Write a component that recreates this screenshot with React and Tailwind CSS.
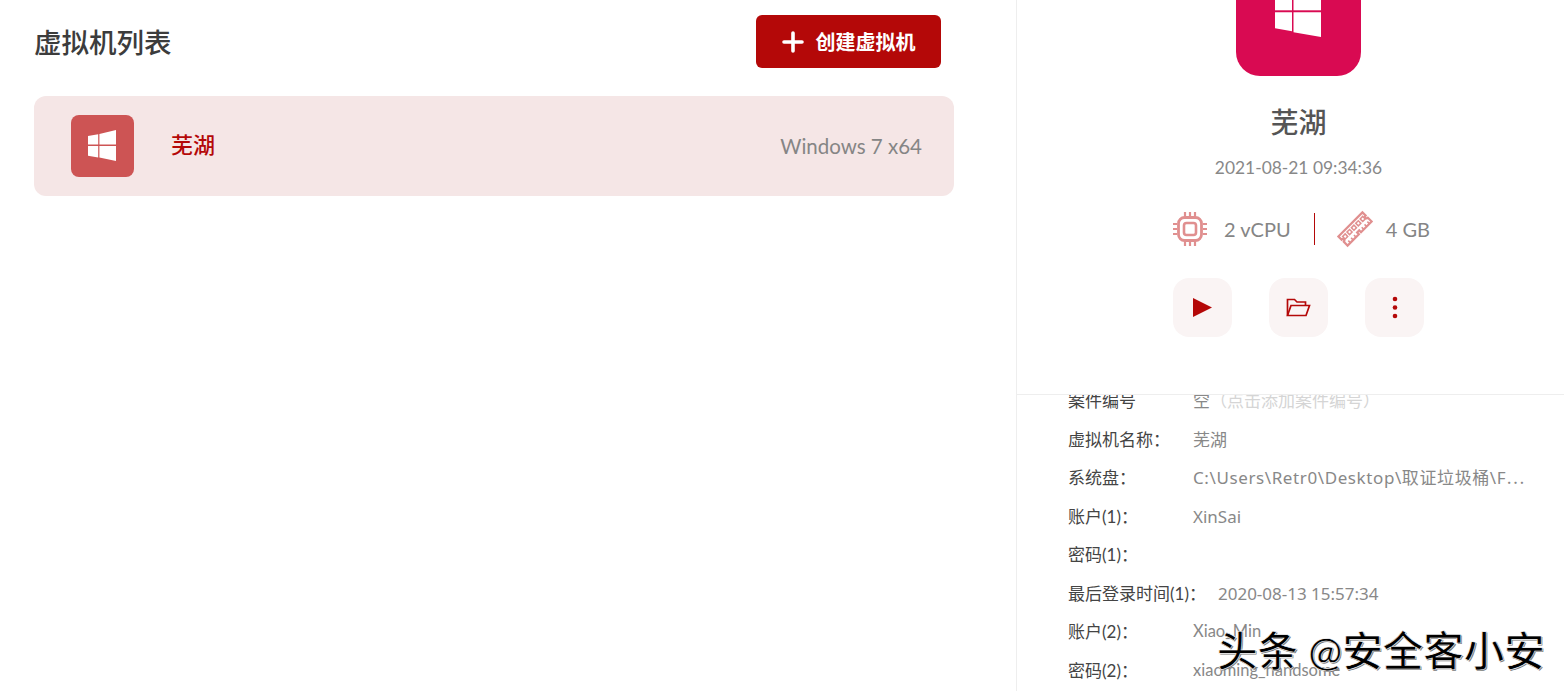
const FONT = "font-['Lato','Noto_Sans_CJK_SC',sans-serif]";
const VALUE = "font-['Noto_Sans','Noto_Sans_CJK_SC',sans-serif] text-[17px]";

const rows = [
  { label: '案件编号', value: '空', hint: '（点击添加案件编号）', valueClass: VALUE },
  { label: '虚拟机名称：', value: '芜湖', valueClass: VALUE },
  { label: '系统盘：', value: 'C:\\Users\\Retr0\\Desktop\\取证垃圾桶\\F⋯', valueClass: `${VALUE} tracking-[0.6px]` },
  { label: '账户(1)：', value: 'XinSai', valueClass: VALUE },
  { label: '密码(1)：', value: '', valueClass: VALUE },
  { label: '最后登录时间(1)：', value: '2020-08-13 15:57:34', valueClass: VALUE },
  { label: '账户(2)：', value: 'Xiao_Min', valueClass: 'text-[16.5px]' },
  { label: '密码(2)：', value: 'xiaoming_handsome', valueClass: 'text-[16.5px]' },
];

function WindowsIcon({ className }) {
  return (
    <svg className={className} viewBox="0 0 28 31" fill="currentColor">
      <polygon points="0,6 10.2,4.2 10.2,14.6 0,14.6" />
      <polygon points="11.4,4 28,0 28,14.6 11.4,14.6" />
      <polygon points="0,16 10.2,16 10.2,27.4 0,25.7" />
      <polygon points="11.4,16 28,16 28,31 11.4,27.6" />
    </svg>
  );
}

function CpuIcon() {
  return (
    <svg className="w-[36px] h-[36px] text-[#e08f8f]" viewBox="0 0 36 36" fill="none" stroke="currentColor">
      <rect x="6.5" y="6.5" width="23" height="23" rx="6" strokeWidth="2.8" />
      <rect x="12" y="12" width="12" height="12" rx="2.5" strokeWidth="2.6" />
      <path
        strokeWidth="2.2"
        d="M13 1v4M18 1v4M23 1v4M13 31v4M18 31v4M23 31v4M1 13h4M1 18h4M1 23h4M31 13h4M31 18h4M31 23h4"
      />
    </svg>
  );
}

function RamIcon() {
  return (
    <svg className="w-[36px] h-[36px] text-[#e08f8f] overflow-visible" viewBox="0 0 36 36" fill="none" stroke="currentColor">
      <g transform="rotate(-45 18 18)">
        <path
          strokeWidth="2.2"
          d="M1 11.5h34v4.5a1.6 1.6 0 0 0 0 3.2v5.3H20v-2.5h-3v2.5H1v-5.3a1.6 1.6 0 0 0 0-3.2z"
        />
        <path strokeWidth="1.6" d="M5 24.5v-3M9 24.5v-3M13 24.5v-3M24 24.5v-3M28 24.5v-3M32 24.5v-3" />
        <rect x="4" y="14.5" width="3.6" height="3.6" strokeWidth="1.5" />
        <rect x="10.2" y="14.5" width="3.6" height="3.6" strokeWidth="1.5" />
        <rect x="16.4" y="14.5" width="3.6" height="3.6" strokeWidth="1.5" />
        <rect x="22.6" y="14.5" width="3.6" height="3.6" strokeWidth="1.5" />
        <rect x="28.8" y="14.5" width="3.6" height="3.6" strokeWidth="1.5" />
      </g>
    </svg>
  );
}

function ActionButton({ children }) {
  return (
    <button className="w-[59px] h-[59px] rounded-2xl bg-[#faf4f4] text-[#b40808] flex items-center justify-center">
      {children}
    </button>
  );
}

export default function App() {
  return (
    <div className={`relative flex w-full h-[691px] overflow-hidden bg-white ${FONT}`}>
      {/* VM list */}
      <div className="w-[1017px] shrink-0 border-r border-[#eeeeee] pl-[34px] pr-[62px] pt-[15px]">
        <div className="flex items-center justify-between pr-[13px]">
          <h2 className="pt-[2px] text-[27.5px] font-medium text-[#3c3c3c]">虚拟机列表</h2>
          <button className="w-[185px] h-[53px] rounded-md bg-[#b40808] text-white flex items-center justify-center gap-[12px] text-[20px] font-bold">
            <svg className="w-[22px] h-[22px]" viewBox="0 0 22 22" stroke="currentColor" strokeWidth="3.6" strokeLinecap="round">
              <path d="M11 2v18M2 11h18" />
            </svg>
            创建虚拟机
          </button>
        </div>

        <div className="mt-[28px] h-[100px] rounded-xl bg-[#f5e6e6] flex items-center pl-[37px] pr-[32px]">
          <div className="w-[63px] h-[62px] rounded-lg bg-[#cd5454] text-white flex items-center justify-center">
            <WindowsIcon className="w-[28px] h-[31px] mr-[2px] mb-[1px]" />
          </div>
          <span className="ml-[37px] pb-[3px] text-[22px] font-medium text-[#b40808]">芜湖</span>
          <span className="ml-auto text-[20.5px] text-[#858585]">Windows 7 x64</span>
        </div>
      </div>

      {/* VM detail */}
      <div className="flex-1 min-w-0 flex flex-col">
        <div className="h-[395px] shrink-0 border-b border-[#eeeeee] pl-[16px] flex flex-col items-center">
          <div className="w-[125px] h-[76px] rounded-b-[24px] bg-[#d90a52] text-white flex justify-center shrink-0">
            <svg className="w-[46px] h-[37px] mr-[2px]" viewBox="0 0 46 37" fill="currentColor">
              <polygon points="0,0 17,0 17,10.3 0,10.3" />
              <polygon points="18.5,0 46,0 46,10.3 18.5,10.3" />
              <polygon points="0,12.3 17,12.3 17,31.2 0,28.3" />
              <polygon points="18.5,12.3 46,12.3 46,37 18.5,32.2" />
            </svg>
          </div>
          <h3 className="mt-[25px] h-[42px] leading-[42px] text-[28px] font-medium text-[#555555]">芜湖</h3>
          <p className="mt-[13px] h-[24px] leading-[24px] text-[17.4px] text-[#888888]">2021-08-21 09:34:36</p>

          <div className="mt-[31px] ml-[5px] flex items-center h-[36px] text-[20px] text-[#858585]">
            <CpuIcon />
            <span className="ml-[16px]">2 vCPU</span>
            <div className="ml-[23px] mr-[22px] h-[32px] border-l border-[#b40808]" />
            <RamIcon />
            <span className="ml-[13px]">4 GB</span>
          </div>

          <div className="mt-[31px] flex gap-[37px]">
            <ActionButton>
              <svg className="w-[19px] h-[19px]" viewBox="0 0 19 19" fill="currentColor">
                <polygon points="0,0 19,9.5 0,19" />
              </svg>
            </ActionButton>
            <ActionButton>
              <svg className="w-[25px] h-[19px]" viewBox="0 0 25 19" fill="none" stroke="currentColor" strokeWidth="1.7">
                <path d="M1.5 17.5V1.5h7l2.5 2.5h8.5v3.5" />
                <path d="M1.5 17.5l3.5-10h18.5l-3.5 10z" />
              </svg>
            </ActionButton>
            <ActionButton>
              <svg className="w-[6px] h-[23px]" viewBox="0 0 6 23" fill="currentColor">
                <circle cx="3" cy="3" r="2.3" />
                <circle cx="3" cy="11.5" r="2.3" />
                <circle cx="3" cy="20" r="2.3" />
              </svg>
            </ActionButton>
          </div>
        </div>

        <div className="flex-1 overflow-hidden pl-[51px] pr-[40px]">
          <div className="-mt-[13.5px] flex flex-col">
            {rows.map((row) => (
              <div key={row.label} className="flex h-[38.5px] items-center whitespace-nowrap">
                <span className="min-w-[125px] pr-[12px] text-[17px] text-[#444444]">{row.label}</span>
                <span className={`${row.valueClass} text-[#888888]`}>
                  {row.value}
                  {row.hint && <span className="text-[#d5d5d5]">{row.hint}</span>}
                </span>
              </div>
            ))}
          </div>
        </div>
      </div>

      {/* Watermark */}
      <div className="absolute left-[1217px] top-[624px] text-[40.5px] leading-[54px] font-medium text-black whitespace-nowrap [-webkit-text-stroke:0.6px_white] [text-shadow:1px_1px_0_#777]">
        头条 @安全客小安
      </div>
    </div>
  );
}
